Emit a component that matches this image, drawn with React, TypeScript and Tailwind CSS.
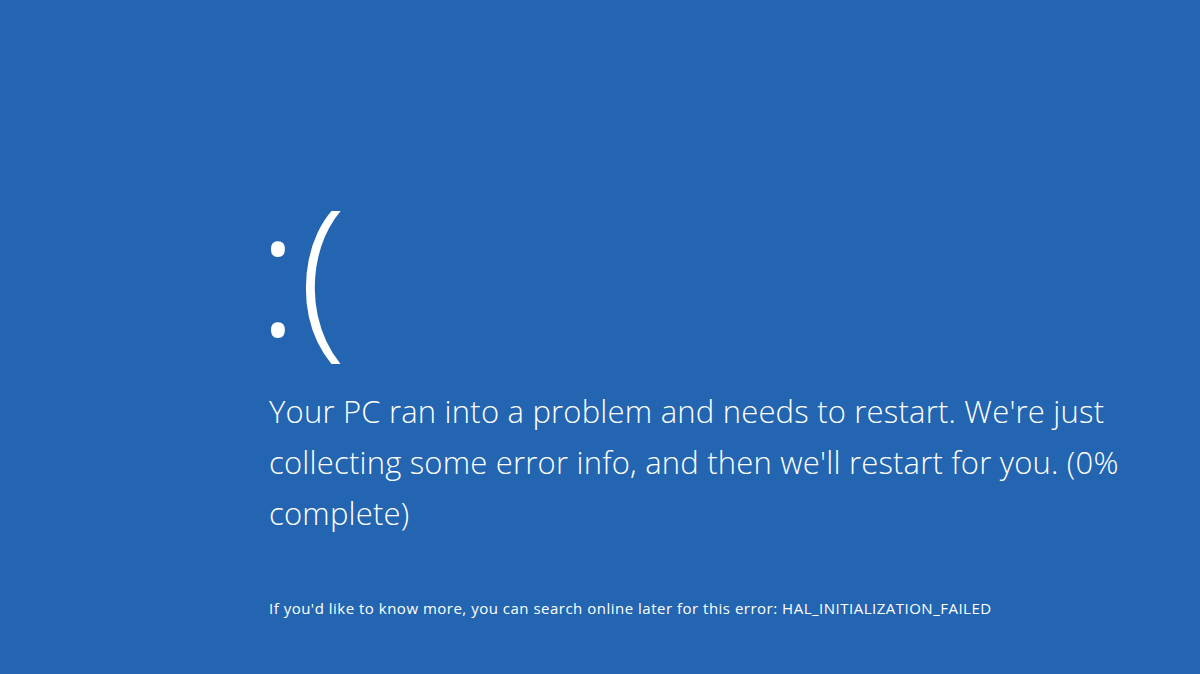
export default function App() {
  return (
    <div className="w-[1200px] h-[674px] bg-[#2365b1] text-white overflow-hidden font-['Open_Sans',sans-serif]">
      <div className="flex flex-col pl-[269px] pt-[168px]">
        <div className="ml-[-12px] text-[175px] leading-[200px] font-light">:(</div>
        <p className="mt-[18px] text-[31px] leading-[51px] font-light tracking-[0.2px]">
          Your PC ran into a problem and needs to restart. We're just
          <br />
          collecting some error info, and then we'll restart for you. (0%
          <br />
          complete)
        </p>
        <p className="mt-[59px] text-[15px] leading-[20px] tracking-[0.5px]">
          If you'd like to know more, you can search online later for this error: HAL_INITIALIZATION_FAILED
        </p>
      </div>
    </div>
  );
}
